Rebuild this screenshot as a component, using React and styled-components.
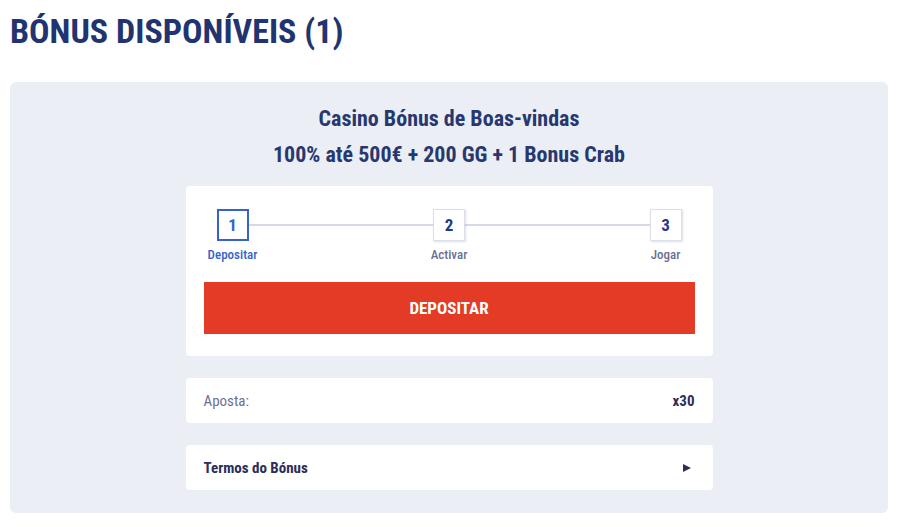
import styled, { createGlobalStyle } from "styled-components";

const Global = createGlobalStyle`
  body {
    margin: 0;
    background: #ffffff;
    font-family: "Roboto Condensed", Roboto, "Liberation Sans", sans-serif;
    font-stretch: 85%;
  }
`;

const Page = styled.div`
  padding: 0 12px 14px 10px;
`;

const Heading = styled.h1`
  margin: 0;
  padding: 11px 0 0;
  height: 82px;
  box-sizing: border-box;
  font-size: 34px;
  line-height: 40px;
  font-weight: 700;
  color: #1f3470;
`;

const Panel = styled.div`
  background: #eceef6;
  border-radius: 6px;
  padding: 19px 0 23px;
  display: flex;
  flex-direction: column;
  align-items: center;
`;

const Title = styled.div`
  font-size: 22px;
  line-height: 36px;
  font-weight: 700;
  color: #27386f;
  text-align: center;
`;

const Column = styled.div`
  width: 527px;
  margin-top: 13px;
  display: flex;
  flex-direction: column;
  gap: 22px;
`;

const Card = styled.div`
  background: #ffffff;
  border-radius: 4px;
  padding: 23px 18px 22px;
`;

const Stepper = styled.div`
  display: flex;
  align-items: flex-start;
`;

const Step = styled.div`
  width: 58px;
  display: flex;
  flex-direction: column;
  align-items: center;
  position: relative;
  z-index: 1;
`;

const StepBox = styled.div`
  width: 32px;
  height: 32px;
  box-sizing: border-box;
  display: flex;
  align-items: center;
  justify-content: center;
  background: #ffffff;
  font-size: 17px;
  font-weight: 700;
  color: ${(p) => (p.active ? "#3563c9" : "#1f3a8a")};
  border: ${(p) => (p.active ? "2px solid #3563c9" : "1px solid #dcdeea")};
  box-shadow: ${(p) => (p.active ? "none" : "1px 1px 2px rgba(60, 70, 120, 0.18)")};
`;

const StepLabel = styled.div`
  margin-top: 6px;
  font-size: 13px;
  line-height: 16px;
  font-weight: 500;
  color: ${(p) => (p.active ? "#3563c9" : "#6b6f94")};
`;

const Connector = styled.div`
  flex: 1;
  height: 2px;
  margin: 15px -13px 0;
  background: #d7d9e8;
`;

const Button = styled.button`
  display: block;
  width: 100%;
  height: 52px;
  margin-top: 19px;
  border: none;
  background: #e33b26;
  color: #ffffff;
  font-family: inherit;
  font-stretch: inherit;
  font-size: 17px;
  font-weight: 700;
  cursor: pointer;
`;

const Row = styled.div`
  background: #ffffff;
  border-radius: 4px;
  height: 45px;
  padding: 0 18px;
  display: flex;
  align-items: center;
  justify-content: space-between;
  font-size: 15px;
`;

const RowLabel = styled.span`
  color: ${(p) => (p.strong ? "#2b2d5a" : "#6b6f94")};
  font-weight: ${(p) => (p.strong ? 700 : 400)};
`;

const RowValue = styled.span`
  color: #2b2d5a;
  font-weight: 700;
`;

const Arrow = styled.span`
  width: 0;
  height: 0;
  margin-right: 4px;
  border-top: 4px solid transparent;
  border-bottom: 4px solid transparent;
  border-left: 8px solid #2b2d5a;
`;

const STEPS = ["Depositar", "Activar", "Jogar"];

export default function App() {
  return (
    <Page>
      <Global />
      <Heading>BÓNUS DISPONÍVEIS (1)</Heading>
      <Panel>
        <Title>Casino Bónus de Boas-vindas</Title>
        <Title>100% até 500€ + 200 GG + 1 Bonus Crab</Title>
        <Column>
          <Card>
            <Stepper>
              {STEPS.map((label, i) => (
                <>
                  {i > 0 && <Connector key={"c" + i} />}
                  <Step key={label}>
                    <StepBox active={i === 0}>{i + 1}</StepBox>
                    <StepLabel active={i === 0}>{label}</StepLabel>
                  </Step>
                </>
              ))}
            </Stepper>
            <Button>DEPOSITAR</Button>
          </Card>
          <Row>
            <RowLabel>Aposta:</RowLabel>
            <RowValue>x30</RowValue>
          </Row>
          <Row>
            <RowLabel strong>Termos do Bónus</RowLabel>
            <Arrow />
          </Row>
        </Column>
      </Panel>
    </Page>
  );
}
